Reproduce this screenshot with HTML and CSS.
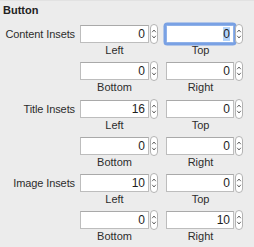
FILE: index.html
```html
<!DOCTYPE html>
<html>
<head>
<meta charset="utf-8">
<link rel="stylesheet" href="styles.css">
</head>
<body>
<div class="panel">
  <div class="title">Button</div>
  <div class="grid">
    <div class="rowlabel">Content Insets</div>
    <div class="cell"><div class="group"><div class="field">0</div><span class="stepper"><svg width="8" height="20" viewBox="0 0 8 20"><rect x="0.5" y="0.5" width="7" height="19" rx="3.5" fill="#fff" stroke="#b3b3b3"/><path d="M2.2 8.2 L4 6 L5.8 8.2" fill="none" stroke="#555" stroke-width="0.9"/><path d="M2.2 11.8 L4 14 L5.8 11.8" fill="none" stroke="#555" stroke-width="0.9"/></svg></span></div><div class="cap">Left</div></div>
    <div class="cell"><div class="group"><div class="field focus"><span class="sel">0</span></div><span class="stepper"><svg width="8" height="20" viewBox="0 0 8 20"><rect x="0.5" y="0.5" width="7" height="19" rx="3.5" fill="#fff" stroke="#b3b3b3"/><path d="M2.2 8.2 L4 6 L5.8 8.2" fill="none" stroke="#555" stroke-width="0.9"/><path d="M2.2 11.8 L4 14 L5.8 11.8" fill="none" stroke="#555" stroke-width="0.9"/></svg></span></div><div class="cap">Top</div></div>

    <div class="rowlabel"></div>
    <div class="cell"><div class="group"><div class="field">0</div><span class="stepper"><svg width="8" height="20" viewBox="0 0 8 20"><rect x="0.5" y="0.5" width="7" height="19" rx="3.5" fill="#fff" stroke="#b3b3b3"/><path d="M2.2 8.2 L4 6 L5.8 8.2" fill="none" stroke="#555" stroke-width="0.9"/><path d="M2.2 11.8 L4 14 L5.8 11.8" fill="none" stroke="#555" stroke-width="0.9"/></svg></span></div><div class="cap">Bottom</div></div>
    <div class="cell"><div class="group"><div class="field">0</div><span class="stepper"><svg width="8" height="20" viewBox="0 0 8 20"><rect x="0.5" y="0.5" width="7" height="19" rx="3.5" fill="#fff" stroke="#b3b3b3"/><path d="M2.2 8.2 L4 6 L5.8 8.2" fill="none" stroke="#555" stroke-width="0.9"/><path d="M2.2 11.8 L4 14 L5.8 11.8" fill="none" stroke="#555" stroke-width="0.9"/></svg></span></div><div class="cap">Right</div></div>

    <div class="rowlabel">Title Insets</div>
    <div class="cell"><div class="group"><div class="field">16</div><span class="stepper"><svg width="8" height="20" viewBox="0 0 8 20"><rect x="0.5" y="0.5" width="7" height="19" rx="3.5" fill="#fff" stroke="#b3b3b3"/><path d="M2.2 8.2 L4 6 L5.8 8.2" fill="none" stroke="#555" stroke-width="0.9"/><path d="M2.2 11.8 L4 14 L5.8 11.8" fill="none" stroke="#555" stroke-width="0.9"/></svg></span></div><div class="cap">Left</div></div>
    <div class="cell"><div class="group"><div class="field">0</div><span class="stepper"><svg width="8" height="20" viewBox="0 0 8 20"><rect x="0.5" y="0.5" width="7" height="19" rx="3.5" fill="#fff" stroke="#b3b3b3"/><path d="M2.2 8.2 L4 6 L5.8 8.2" fill="none" stroke="#555" stroke-width="0.9"/><path d="M2.2 11.8 L4 14 L5.8 11.8" fill="none" stroke="#555" stroke-width="0.9"/></svg></span></div><div class="cap">Top</div></div>

    <div class="rowlabel"></div>
    <div class="cell"><div class="group"><div class="field">0</div><span class="stepper"><svg width="8" height="20" viewBox="0 0 8 20"><rect x="0.5" y="0.5" width="7" height="19" rx="3.5" fill="#fff" stroke="#b3b3b3"/><path d="M2.2 8.2 L4 6 L5.8 8.2" fill="none" stroke="#555" stroke-width="0.9"/><path d="M2.2 11.8 L4 14 L5.8 11.8" fill="none" stroke="#555" stroke-width="0.9"/></svg></span></div><div class="cap">Bottom</div></div>
    <div class="cell"><div class="group"><div class="field">0</div><span class="stepper"><svg width="8" height="20" viewBox="0 0 8 20"><rect x="0.5" y="0.5" width="7" height="19" rx="3.5" fill="#fff" stroke="#b3b3b3"/><path d="M2.2 8.2 L4 6 L5.8 8.2" fill="none" stroke="#555" stroke-width="0.9"/><path d="M2.2 11.8 L4 14 L5.8 11.8" fill="none" stroke="#555" stroke-width="0.9"/></svg></span></div><div class="cap">Right</div></div>

    <div class="rowlabel">Image Insets</div>
    <div class="cell"><div class="group"><div class="field">10</div><span class="stepper"><svg width="8" height="20" viewBox="0 0 8 20"><rect x="0.5" y="0.5" width="7" height="19" rx="3.5" fill="#fff" stroke="#b3b3b3"/><path d="M2.2 8.2 L4 6 L5.8 8.2" fill="none" stroke="#555" stroke-width="0.9"/><path d="M2.2 11.8 L4 14 L5.8 11.8" fill="none" stroke="#555" stroke-width="0.9"/></svg></span></div><div class="cap">Left</div></div>
    <div class="cell"><div class="group"><div class="field">0</div><span class="stepper"><svg width="8" height="20" viewBox="0 0 8 20"><rect x="0.5" y="0.5" width="7" height="19" rx="3.5" fill="#fff" stroke="#b3b3b3"/><path d="M2.2 8.2 L4 6 L5.8 8.2" fill="none" stroke="#555" stroke-width="0.9"/><path d="M2.2 11.8 L4 14 L5.8 11.8" fill="none" stroke="#555" stroke-width="0.9"/></svg></span></div><div class="cap">Top</div></div>

    <div class="rowlabel"></div>
    <div class="cell"><div class="group"><div class="field">0</div><span class="stepper"><svg width="8" height="20" viewBox="0 0 8 20"><rect x="0.5" y="0.5" width="7" height="19" rx="3.5" fill="#fff" stroke="#b3b3b3"/><path d="M2.2 8.2 L4 6 L5.8 8.2" fill="none" stroke="#555" stroke-width="0.9"/><path d="M2.2 11.8 L4 14 L5.8 11.8" fill="none" stroke="#555" stroke-width="0.9"/></svg></span></div><div class="cap">Bottom</div></div>
    <div class="cell"><div class="group"><div class="field">10</div><span class="stepper"><svg width="8" height="20" viewBox="0 0 8 20"><rect x="0.5" y="0.5" width="7" height="19" rx="3.5" fill="#fff" stroke="#b3b3b3"/><path d="M2.2 8.2 L4 6 L5.8 8.2" fill="none" stroke="#555" stroke-width="0.9"/><path d="M2.2 11.8 L4 14 L5.8 11.8" fill="none" stroke="#555" stroke-width="0.9"/></svg></span></div><div class="cap">Right</div></div>
  </div>
</div>
</body>
</html>
```
FILE: styles.css
```css
html, body {
  margin: 0;
  padding: 0;
  background: #ececec;
}
.panel {
  width: 254px;
  height: 247px;
  box-sizing: border-box;
  border-top: 1px solid #e2e2e2;
  background: #ececec;
  font-family: "Liberation Sans", Arial, sans-serif;
  font-size: 11px;
  color: #2c2c2c;
  overflow: hidden;
}
.title {
  font-weight: bold;
  font-size: 11px;
  line-height: 14px;
  padding: 2px 0 0 3px;
  color: #222;
}
.grid {
  display: grid;
  grid-template-columns: 80px 86px 77px;
  margin-top: 7px;
  padding-top: 1px;
}
.rowlabel {
  height: 18px;
  line-height: 18px;
  text-align: right;
  padding-right: 5px;
  white-space: nowrap;
  letter-spacing: -0.1px;
  color: #2c2c2c;
}
.cell {
  height: 37.3px;
  display: flex;
  flex-direction: column;
}
.group {
  display: flex;
  align-items: center;
  height: 18px;
  gap: 1px;
}
.field {
  width: 69px;
  height: 18px;
  box-sizing: border-box;
  background: #fff;
  border: 1px solid #bdbdbd;
  border-top-color: #a9a9a9;
  text-align: right;
  padding-right: 3px;
  font-size: 12px;
  line-height: 16px;
  color: #1e1e1e;
}
.field.focus {
  border-color: #8fb1e8;
  box-shadow: 0 0 0 2.5px rgba(92, 142, 226, 0.8);
  border-radius: 1.5px;
}
.sel {
  background: #b4d4fb;
}
.stepper {
  display: flex;
  width: 8px;
  height: 20px;
}
.cap {
  width: 69px;
  text-align: center;
  line-height: 14px;
  color: #2c2c2c;
}
```
